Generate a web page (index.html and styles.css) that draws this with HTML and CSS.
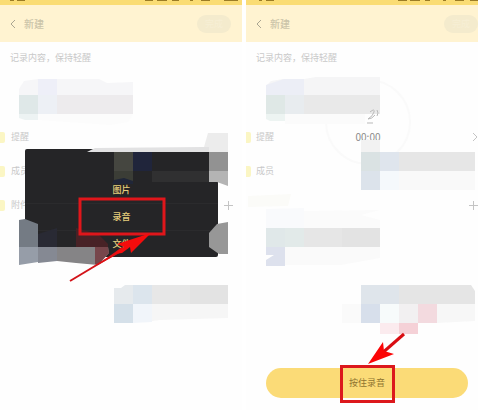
FILE: index.html
```
<!DOCTYPE html>
<html lang="zh-CN">
<head>
<meta charset="UTF-8" />
<meta name="viewport" content="width=device-width, initial-scale=1" />
<title>新建</title>
<link rel="stylesheet" href="styles.css">
</head>
<body>

<div class="guide">

  <!-- Step 1: attachment menu -->
  <section class="screen screen-menu">
    <div class="status-bar"></div>
    <header class="top-bar">
      <button type="button" class="back-btn" aria-label="返回">
        <svg width="6" height="10" viewBox="0 0 6 10"><path d="M5 1 1 5l4 4" /></svg>
      </button>
      <h1>新建</h1>
      <button type="button" class="done-btn">完成</button>
    </header>
    <p class="note">记录内容，保持轻醒</p>
    <ul class="options">
      <li><span class="mark"></span>提醒</li>
      <li><span class="mark"></span>成员</li>
      <li><span class="mark"></span>附件
        <button type="button" class="add-btn" aria-label="添加附件">
          <svg width="9" height="9" viewBox="0 0 9 9"><path d="M4.5 0v9M0 4.5h9" /></svg>
        </button>
      </li>
    </ul>

    <div class="menu">
      <button type="button">图片</button>
      <button type="button">录音</button>
      <button type="button">文件</button>
    </div>

    <svg class="overlay" width="242" height="410" viewBox="0 0 242 410" aria-hidden="true">
      <!-- status icons -->
      <path d="M10 0h4M17 0h8M145 0h8M157 0h10M172 0h7M190 0h3M201 0h9M224 0h14" stroke="#9b7c26" stroke-width="2" />
      <!-- mosaic, top -->
      <path d="M19 89 24 81 38 79H99L107 83 133 82V95H19z" fill="#f6f6f8" />
      <path d="M38 79H57V95H38z" fill="#eeeff8" />
      <path d="M19 95H38V114H19z" fill="#dfe8e8" />
      <path d="M38 95H57V114H38z" fill="#edf0f5" />
      <path d="M57 95H133V114H57z" fill="#edebed" />
      <path d="M19 114H38V120H25L19 118z" fill="#edf3f3" />
      <path d="M38 114H133L128 122 110 125 38 120z" fill="#fcfcfc" />
      <!-- mosaic, over the menu -->
      <path d="M204 147 208 133H228V152H204z" fill="#ececec" />
      <path d="M87 152 95 148 203 147H209V152z" fill="#e2e2e3" />
      <path d="M114 152H133V171H114z" fill="#454640" />
      <path d="M133 152H152V171H133z" fill="#20253b" />
      <path d="M114 171H133V181H114z" fill="#3b3d36" />
      <path d="M114 180 124 178 133 181V184H112z" fill="#202638" />
      <path d="M152 171H209V182H152z" fill="#303031" />
      <path d="M209 152H228V171H209z" fill="#929292" />
      <path d="M209 171H228V186L217 182H209z" fill="#b4b4b4" />
      <path d="M19 220 25 219 38 224V247H19z" fill="#747b84" />
      <path d="M38 234 57 228V247H38z" fill="#292a34" />
      <path d="M76 228 98 234 108 244V247H76z" fill="#482226" />
      <path d="M19 247H38V262L19 265z" fill="#969da8" />
      <path d="M38 247H57V261L38 263z" fill="#858993" />
      <path d="M57 247H108L109 253 98 265 76 263 57 261z" fill="#858486" />
      <path d="M95 247H108L109 253 98 265 95 264z" fill="#77464b" />
      <path d="M209 233 217 224 228 222V254H219L209 247z" fill="#979797" />
      <!-- mosaic, bottom -->
      <path d="M114 288H121L125 285H133V304H114z" fill="#e6eaed" />
      <path d="M133 285H152V304H133z" fill="#dce5ed" />
      <path d="M152 285H190V304H152z" fill="#e7e7e7" />
      <path d="M190 285H228V304H190z" fill="#e3e3e3" />
      <path d="M114 304H133V323H114z" fill="#d5e0e9" />
      <path d="M133 304H152V322L133 323z" fill="#f1f5fa" />
      <path d="M152 304H228V318L160 320 152 321z" fill="#f6f6f6" />
      <!-- pointer -->
      <rect x="80" y="199" width="84" height="35" fill="none" stroke="#e0161b" stroke-width="3" />
      <path d="M70 281 125 248" stroke="#d31319" stroke-width="2" />
      <path d="M96 266 122 247 125 250z" fill="#e01014" />
      <path d="M151 233 117 244 124 247 114 254 122 253 130 247 131 253z" fill="#f50c0c" />
    </svg>
  </section>

  <!-- Step 2: hold to record -->
  <section class="screen screen-record">
    <div class="status-bar"></div>
    <header class="top-bar">
      <button type="button" class="back-btn" aria-label="返回">
        <svg width="6" height="10" viewBox="0 0 6 10"><path d="M5 1 1 5l4 4" /></svg>
      </button>
      <h1>新建</h1>
      <button type="button" class="done-btn">完成</button>
    </header>
    <p class="note">记录内容，保持轻醒</p>
    <ul class="options">
      <li><span class="mark"></span>提醒
        <svg class="chevron" width="6" height="10" viewBox="0 0 6 10"><path d="m1 1 4 4-4 4" /></svg>
      </li>
      <li><span class="mark"></span>成员</li>
      <li>
        <button type="button" class="add-btn" aria-label="添加附件">
          <svg width="9" height="9" viewBox="0 0 9 9"><path d="M4.5 0v9M0 4.5h9" /></svg>
        </button>
      </li>
    </ul>

    <div class="timer">00:00</div>

    <div class="record-bar">
      <button type="button" class="record-btn">按住录音</button>
    </div>

    <svg class="overlay" width="232" height="410" viewBox="0 0 232 410" aria-hidden="true">
      <path d="M13 0h3M20 0h8M152 0h9M164 0h10M179 0h5M197 0h3M209 0h9M224 0h8" stroke="#9b7c26" stroke-width="2" />
      <!-- mosaic, top -->
      <path d="M20 86 25 81 37 79 58 79 70 77H134V95H20z" fill="#f5f5f6" />
      <path d="M20 85 38 79H58V95H20z" fill="#eceef6" />
      <path d="M20 95H39V114H20z" fill="#dfe8e6" />
      <path d="M39 95H58V114H39z" fill="#e8ecef" />
      <path d="M58 95H134V114H58z" fill="#e9e9e9" />
      <path d="M20 114H39V121H24L20 119z" fill="#edf4f2" />
      <path d="M39 114H119V124H39z" fill="#fbfbfb" />
      <!-- microphone -->
      <path d="M124 112q5-4 4 0t-6 7q4 0 7-4M131 110q2 3 0 6M121 123h6" fill="none" stroke="#b9b9b9" />
      <!-- mosaic, member row -->
      <path d="M115 140H134V152H115z" fill="#f2f2f2" />
      <path d="M115 152H134V171H115z" fill="#dae2e3" />
      <path d="M134 152H153V171H134z" fill="#dfe5ed" />
      <path d="M153 152H229V171H153z" fill="#e6e6e6" />
      <path d="M115 171H134V190H115z" fill="#dce3eb" />
      <path d="M134 171H153V190H134z" fill="#f5f9fc" />
      <path d="M153 171H229V190H153z" fill="#f9f9f9" />
      <!-- mosaic, attachment row -->
      <path d="M2 196 45 194 42 206 2 207z" fill="#fbfbf8" />
      <path d="M20 209 58 208V228H20z" fill="#f9fafc" />
      <path d="M58 211 134 210 115 215 134 220V228H58z" fill="#fbfbfb" />
      <path d="M20 228H39V247H20z" fill="#e0e8e9" />
      <path d="M39 228H58V247H39z" fill="#e2eae9" />
      <path d="M58 228H96V247H58z" fill="#e6e6e6" />
      <path d="M96 228H134V247H96z" fill="#e3e3e3" />
      <path d="M20 247H39V266H20V260L28 255H20z" fill="#dde1ed" />
      <path d="M39 247H134V258L95 265H39z" fill="#fafafa" />
      <!-- mosaic, bottom -->
      <path d="M96 304H115V323H96z" fill="#fafafa" />
      <path d="M115 285H153V304H115z" fill="#dfe5eb" />
      <path d="M153 285H225L229 291V304H153z" fill="#e5e5e5" />
      <path d="M115 304H134V323H115z" fill="#d7dfeb" />
      <path d="M134 304H153V323H134z" fill="#f7fbfb" />
      <path d="M153 304H172V323H153z" fill="#f2f0f1" />
      <path d="M172 304H191V323H172z" fill="#f3dadf" />
      <path d="M191 304H229V321L191 323z" fill="#f7f7f7" />
      <path d="M134 323H153V334H134z" fill="#fbebee" />
      <path d="M153 323H172V334H153z" fill="#f5d1d7" />
      <!-- pointer -->
      <path d="M158 334 134 355" stroke="#d90d12" stroke-width="3" />
      <path d="M122 364 137 342 138 351 148 354z" fill="#fb0506" />
      <path d="M94 365H149V403H94zM97 368V400H146V368z" fill="#dc181c" fill-rule="evenodd" />
    </svg>
  </section>

</div>

</body>
</html>
```
FILE: styles.css
```
/* Reset & base */
*, *::before, *::after {
  box-sizing: border-box;
}
body {
  margin: 0;
  font-family: "Noto Sans CJK SC", sans-serif;
  font-size: 9px;
  line-height: 14px;
  background: #fff;
  color: #c9c9c9;
}
button {
  padding: 0;
  border: none;
  background: none;
  font: inherit;
  color: inherit;
  cursor: pointer;
}
svg {
  display: block;
}

/* Two screens side by side */
.guide {
  display: flex;
  gap: 4px;
  min-height: 100vh;
}
.screen {
  position: relative;
  display: flex;
  flex-direction: column;
  min-width: 0;
  overflow: hidden;
  background: #fefefe;
}
.screen-menu {
  flex: 242 1 0;
}
.screen-record {
  flex: 232 1 0;
}

/* Header */
.status-bar {
  height: 5px;
  background: #fadc74;
}
.top-bar {
  display: flex;
  align-items: center;
  height: 37px;
  padding: 0 11px 0 10px;
  background: #fff3d1;
}
.screen-record .top-bar {
  padding-right: 0;
}
.back-btn path {
  fill: none;
  stroke: #aaa592;
  stroke-width: 1;
}
.top-bar h1 {
  margin: 0 auto 0 8px;
  font-size: 10px;
  font-weight: 500;
  color: #cbc4a9;
}
.done-btn {
  width: 34px;
  height: 18px;
  border-radius: 9px;
  background: #f4ebcd;
  color: #f7efd5;
}

/* Form content */
.note {
  height: 78px;
  margin: 0;
  padding: 9px 10px;
}
.options {
  margin: 0;
  padding: 0;
  list-style: none;
}
.options li {
  display: flex;
  align-items: center;
  height: 34px;
  padding-right: 9px;
}
.screen-record .options li {
  padding-right: 0;
}
.mark {
  width: 5px;
  height: 11px;
  margin-right: 6px;
  border-radius: 0 2px 2px 0;
  background: #fbf6c4;
}
.screen-record .mark {
  margin-right: 5px;
}
.add-btn,
.chevron {
  margin-left: auto;
}
.add-btn path,
.chevron path {
  fill: none;
  stroke: #c4c4c4;
}

/* Attachment menu */
.menu {
  position: absolute;
  top: 149px;
  left: 25px;
  right: 24px;
  display: flex;
  flex-direction: column;
  padding-top: 27px;
  border-radius: 2px;
  background: #252527;
  color: #e6ce7c;
  font-weight: 500;
}
.menu button {
  height: 27px;
}
.menu button + button {
  border-top: 1px solid #2b2b2d;
}

/* Recording */
.timer {
  position: absolute;
  top: 79px;
  left: 79px;
  width: 86px;
  height: 86px;
  padding-top: 49px;
  border: 2px solid #fafafa;
  border-radius: 50%;
  color: #8c8c8c;
  font-size: 10px;
  text-align: center;
}
.record-bar {
  margin-top: auto;
  padding: 0 10px 12px 20px;
}
.record-btn {
  width: 100%;
  height: 30px;
  border-radius: 15px;
  background: #fbdb77;
  color: #8f7430;
}

/* Mosaic and pointers */
.overlay {
  position: absolute;
  top: 0;
  left: 0;
  pointer-events: none;
}
```
